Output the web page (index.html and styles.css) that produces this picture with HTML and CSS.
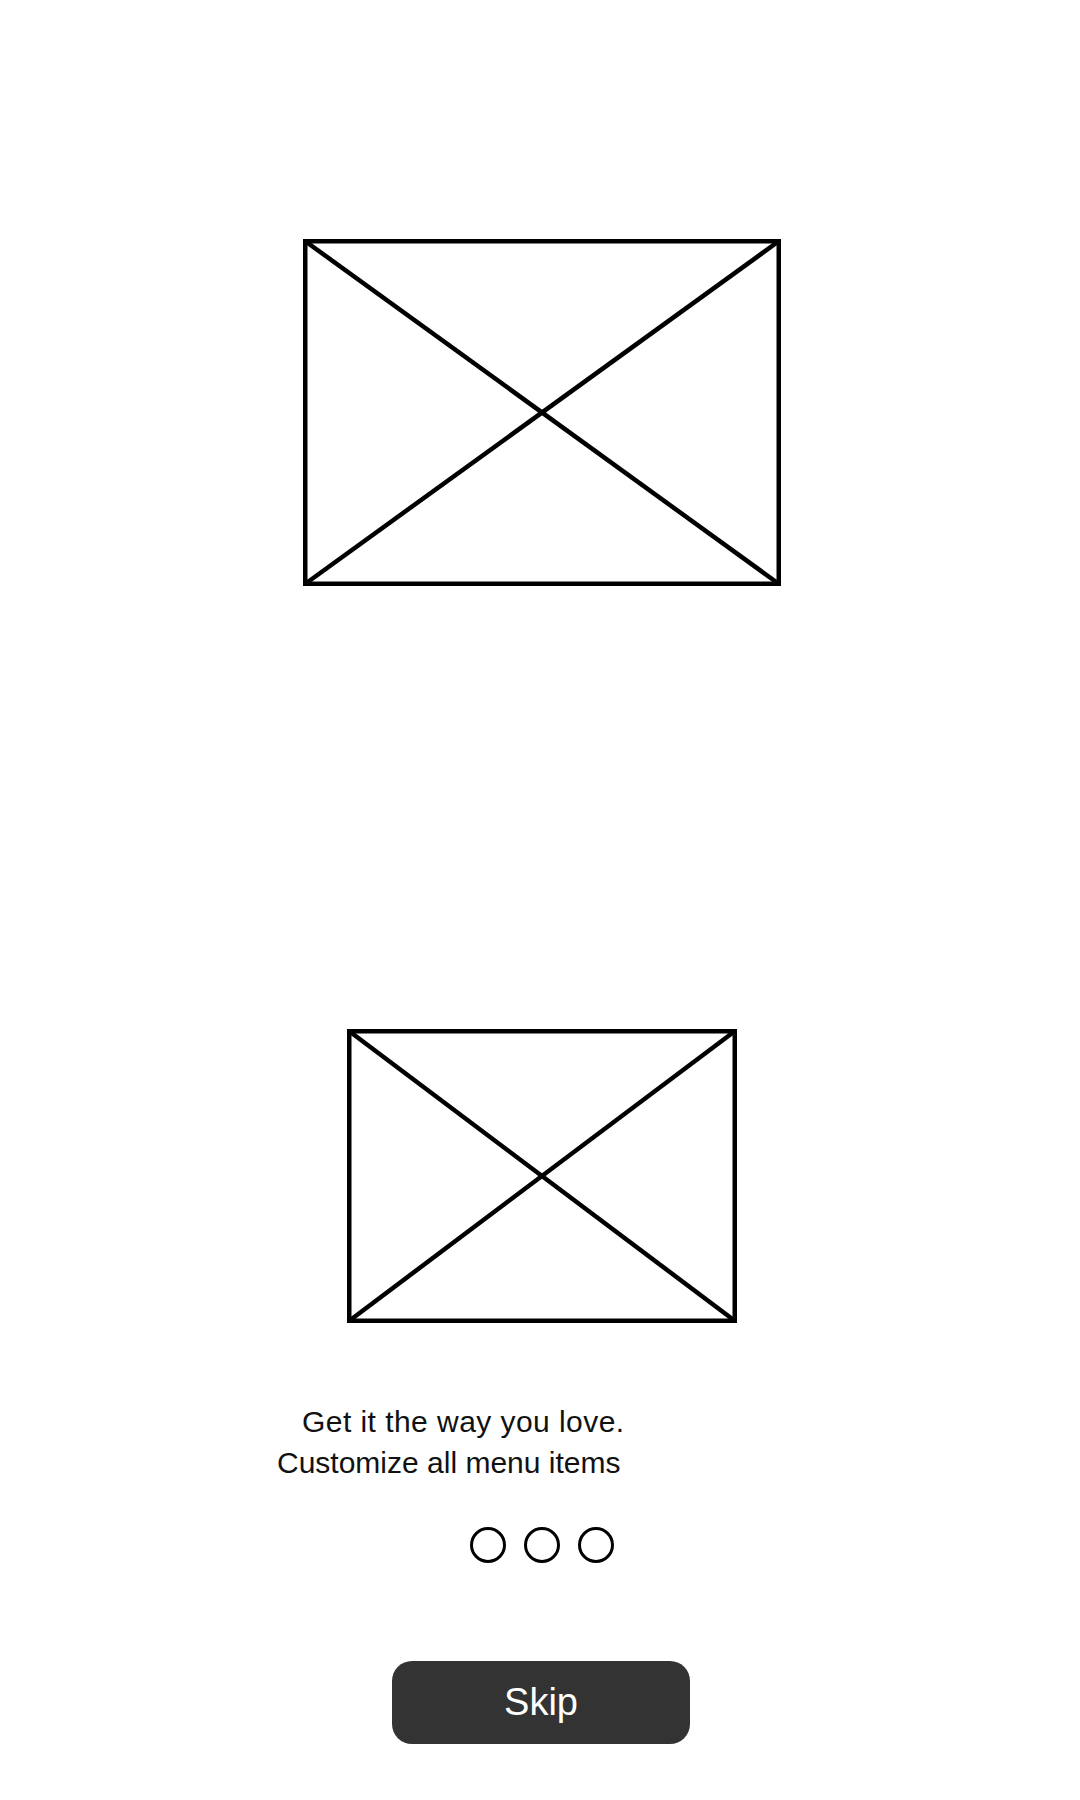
FILE: index.html
```html
<!DOCTYPE html>
<html lang="en">
<head>
<meta charset="utf-8">
<title>Onboarding</title>
<link rel="stylesheet" href="styles.css">
</head>
<body>
<main class="screen">
  <svg class="placeholder placeholder-top" width="478" height="347" viewBox="0 0 478 347">
    <rect x="2.25" y="2.25" width="473.5" height="342.5" fill="none" stroke="#000" stroke-width="4.5"/>
    <line x1="2" y1="2" x2="476" y2="345" stroke="#000" stroke-width="4.5"/>
    <line x1="476" y1="2" x2="2" y2="345" stroke="#000" stroke-width="4.5"/>
  </svg>
  <svg class="placeholder placeholder-bottom" width="390" height="294" viewBox="0 0 390 294">
    <rect x="2.25" y="2.25" width="385.5" height="289.5" fill="none" stroke="#000" stroke-width="4.5"/>
    <line x1="2" y1="2" x2="388" y2="292" stroke="#000" stroke-width="4.5"/>
    <line x1="388" y1="2" x2="2" y2="292" stroke="#000" stroke-width="4.5"/>
  </svg>
  <div class="caption">
    <p class="caption-line caption-first">Get it the way you love.</p>
    <p class="caption-line">Customize all menu items</p>
  </div>
  <div class="dots">
    <span class="dot"></span>
    <span class="dot"></span>
    <span class="dot"></span>
  </div>
  <button class="skip" type="button">Skip</button>
</main>
</body>
</html>
```

FILE: styles.css
```css
html, body {
  margin: 0;
  padding: 0;
  background: #ffffff;
}

body {
  width: 1080px;
  height: 1800px;
  font-family: "Liberation Sans", Arial, sans-serif;
  color: #000;
}

.screen {
  display: flex;
  flex-direction: column;
  align-items: center;
  padding-top: 239px;
  padding-left: 4px;
  box-sizing: border-box;
  width: 1080px;
}

.placeholder {
  display: block;
}

.placeholder-bottom {
  margin-top: 443px;
}

.caption {
  align-self: flex-start;
  margin-left: 273px;
  margin-top: 78px;
  font-size: 30px;
  line-height: 41px;
  color: #111;
}

.caption-line {
  margin: 0;
  white-space: nowrap;
}

.caption-first {
  padding-left: 25px;
  letter-spacing: 0.45px;
}

.dots {
  display: flex;
  gap: 18px;
  margin-top: 44px;
}

.dot {
  width: 36px;
  height: 36px;
  box-sizing: border-box;
  border: 3px solid #000;
  border-radius: 50%;
}

.skip {
  margin-top: 98px;
  width: 298px;
  height: 83px;
  border: none;
  border-radius: 20px;
  background: #333333;
  color: #ffffff;
  font-family: "Liberation Sans", Arial, sans-serif;
  font-size: 38px;
  padding: 0;
  margin-left: -2px;
}
```
